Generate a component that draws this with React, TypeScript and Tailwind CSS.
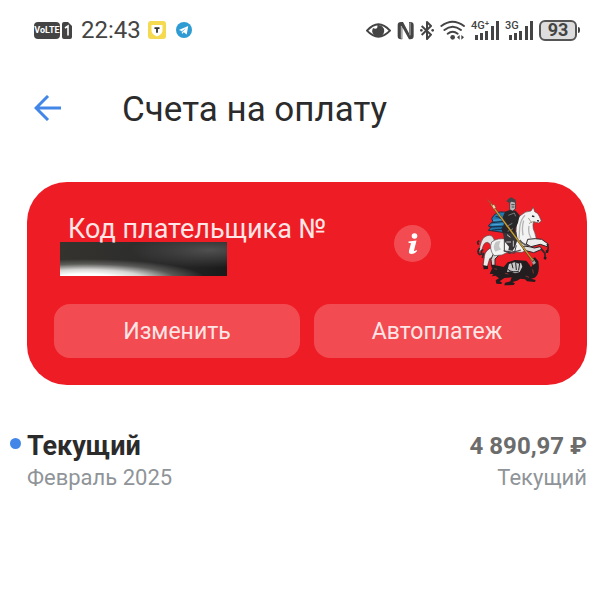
import type { ReactNode } from "react";

type Bill = {
  id: number;
  title: string;
  period: string;
  amount: string;
  status: string;
  isNew: boolean;
};

const bills: Bill[] = [
  {
    id: 1,
    title: "Текущий",
    period: "Февраль 2025",
    amount: "4 890,97 ₽",
    status: "Текущий",
    isNew: true,
  },
];

function EyeIcon() {
  return (
    <svg viewBox="30 30 75 60" className="h-5 w-[25px]" aria-hidden="true">
      <path d="M33 62Q67 24 102 62Q67 98 33 62Z" fill="none" stroke="#444" strokeWidth="6" />
      <path d="M64 45q2 11-6 11-4 0-7-2a18 18 0 1 0 13-9Z" fill="#444" />
    </svg>
  );
}

function NfcIcon() {
  return (
    <svg viewBox="126 30 51 60" className="h-5 w-[17px]" fill="none" aria-hidden="true">
      <path d="M144 36h-6q-10 0-10 10v32q0 10 10 10h4V52l20 36h4q10 0 10-10V46q0-10-10-10h-4v34Z" fill="#444" />
      <path d="M139 48v38M165 38v38" stroke="#fff" strokeWidth="2" />
    </svg>
  );
}

function BluetoothIcon() {
  return (
    <svg viewBox="195 30 42 60" className="h-5 w-3.5" fill="none" aria-hidden="true">
      <path
        d="M200 48l28 26-12 13V36l12 12-28 27"
        stroke="#444"
        strokeWidth="6"
        strokeLinejoin="round"
      />
      <circle cx="199" cy="61" r="4" fill="#444" />
      <circle cx="233" cy="61" r="4" fill="#444" />
    </svg>
  );
}

function WifiIcon() {
  return (
    <svg viewBox="252 30 75 60" className="h-5 w-[25px]" fill="none" aria-hidden="true">
      <g stroke="#444" strokeWidth="6" strokeLinecap="round">
        <path d="M256 48q34-26 68 0" />
        <path d="M265 60q25-20 50 0" />
        <path d="M275 71q15-12 30 0" />
      </g>
      <circle cx="290" cy="82" r="7" fill="#444" />
      <path d="M311 75v14l-8-7ZM316 75v14l8-7Z" fill="#444" />
    </svg>
  );
}

function SignalIcon({ label }: { label: string }) {
  return (
    <svg viewBox="0 0 28 20" className="h-5 w-7 overflow-visible" fill="#444" role="img" aria-label={label}>
      <text x="0" y="9" fontSize="11" fontWeight="500">
        {label}
      </text>
      <path d="M4 15h3v5H4ZM9 13h3v7H9ZM14 11h3v9h-3ZM20 6h3v14h-3ZM25 1h3v19h-3Z" />
    </svg>
  );
}

function StatusBar() {
  return (
    <div className="flex h-5 items-center justify-between pr-[34px] pl-[34px] text-[#444]">
      <div className="flex items-center">
        <span className="flex h-[17px] w-[26px] items-center justify-center rounded-sm bg-[#444] text-[9px] leading-none font-bold text-white">
          VoLTE
        </span>
        <svg viewBox="0 0 10 17" className="ml-0.5 h-[17px] w-2.5" aria-hidden="true">
          <path d="M2 0h4l4 4v11a2 2 0 0 1-2 2H2a2 2 0 0 1-2-2V2a2 2 0 0 1 2-2Z" fill="#444" />
          <path d="M3 6l3-2v9.500" fill="none" stroke="#fff" strokeWidth="1.600" />
        </svg>
        <time className="ml-[9px] text-2xl leading-5">22:43</time>
        <svg viewBox="0 0 18 18" className="ml-[7px] size-[18px]" aria-hidden="true">
          <rect width="18" height="18" rx="3" fill="#f5d94f" />
          <path d="M3.500 4h11v5.500c0 3-3 5-5.500 6-2.500-1-5.500-3-5.500-6Z" fill="#fff" />
          <path d="M6.500 6.200h5v1.800h-1.600v3.800H8.100V8H6.500Z" fill="#333" />
        </svg>
        <svg viewBox="0 0 16 16" className="ml-2.5 size-4" aria-hidden="true">
          <circle cx="8" cy="8" r="8" fill="#2f9bd3" />
          <path d="M2.800 8l9.400-3.900-1.500 8.300-3-2.100-1.700 1.600-.3-2.800Z" fill="#fff" />
          <path d="M5.800 9.200l4.200-3-3.500 3.600Z" fill="#2f9bd3" />
        </svg>
      </div>
      <div className="flex items-center gap-1.5">
        <EyeIcon />
        <NfcIcon />
        <BluetoothIcon />
        <WifiIcon />
        <SignalIcon label="4G⁺" />
        <SignalIcon label="3G" />
        <div className="flex items-center gap-px">
          <span className="flex h-[21px] w-[38px] items-center justify-center rounded-md border-2 border-[#555] bg-[#ddd] text-lg leading-none font-bold">
            93
          </span>
          <span className="h-1.5 w-0.5 rounded-r-sm bg-[#444]" />
        </div>
      </div>
    </div>
  );
}

// Saint George on horseback over the dragon
function MoscowEmblem() {
  return (
    <svg viewBox="0 0 285 300" className="h-[100px] w-[95px] shrink-0" role="img" aria-label="Герб Москвы">
      {/* dragon */}
      <path
        d="M82 234q6-10 18-7l16 4 12-14 22-7 34 2 8 10 6 10 6-10-6-14 12-6 10 12q4 24-2 38-6 14-20 14l14 4-2 6-24-2-6-6-14-2-10 6-14 4 8 4-4 5-28 1 2-8 16-4 4-12-22 2-14 10 8 4-4 4-14-1-2-10 10-6-10-8-12 2 6-6-12-2Z"
        fill="#231d1f"
      />
      <path d="M132 222l16-5 14 4 6-3 4 12-8 16-14 4-14-6-10 2Z" fill="#c9c9c9" />
      <path d="M140 219l4 16M152 218l2 22M164 220l-3 20M128 238q16 12 34 5" stroke="#231d1f" strokeWidth="3" fill="none" />
      <path d="M196 208l8-3 9 14-8 5Z" fill="#a8a2a2" />
      <path d="M88 236l8 2M182 258l10 4M120 250l10 2M203 238l2 12" stroke="#8a3335" strokeWidth="3" />

      {/* tail and hind legs */}
      <path d="M88 150q-6-18-22-13-13 4-17 18-4 10-7 30l9-6q4-22 16-22 8 2 12 14Z" fill="#e4e4e4" stroke="#5a4a4c" strokeWidth="2" />
      <path d="M43 152q-9 4-2 12M44 174q-10 12 0 20l6-2q-3-8 4-14M56 188l-4 16" fill="none" stroke="#30272a" strokeWidth="5" />
      <path d="M84 170q-26 12-26 30l-4 28 13 2 7-24 26-16Z" fill="#ededed" stroke="#30272a" strokeWidth="2" />
      <path d="M98 180q-18 14-20 28l2 20 10-1v-20l18-18Z" fill="#cfcfcf" stroke="#30272a" strokeWidth="3" />
      <path d="M54 226l2 12 13-1v-9ZM79 224l1 10 13-2-2-8Z" fill="#231d1f" />

      {/* horse */}
      <path
        d="M80 156q18-14 44-8l28-4 2-36q2-26 16-34 10-10 28-11l7-11 4 13q11 4 14 14l6 14-8 6-15-4-2 8q-1 14 5 24 8 18 2 34l-12 12-28 14-40-2-20 10-24 2q-16-20-7-41Z"
        fill="#f3f3f3"
        stroke="#5a4a4c"
        strokeWidth="2"
      />
      <path d="M180 76q-14 14-16 38l-2 32M176 92q-6 20-2 44M192 108q-4 20 6 36" fill="none" stroke="#b3b3b3" strokeWidth="4" />
      <path d="M93 155q-12 14-2 30l18-7q-12-10-2-26Z" fill="#c4c4c4" />
      <path d="M116 182q26 8 52-2M164 150q12 16 28 16" fill="none" stroke="#555" strokeWidth="4" />
      <path d="M201 78l7 2M216 92l6 1" stroke="#222" strokeWidth="4" />
      <path d="M192 101q12-10 20-2M190 84l10 14" fill="none" stroke="#7b7558" strokeWidth="2" />

      {/* front legs */}
      <path d="M188 148q24-4 42 0l20 14-4 8-20-7-28 7-14-8Z" fill="#ededed" stroke="#30272a" strokeWidth="3" />
      <path d="M176 168q22 2 32 6l18-4 4 8-24 10-30-8Z" fill="#dedede" stroke="#30272a" strokeWidth="3" />
      <path d="M246 162q6 8 2 20M228 176l12 14v12" fill="none" stroke="#30272a" strokeWidth="5" />
      <path d="M243 180l8 1-2 8-7-1ZM237 200l8 1-2 8-7-2Z" fill="#231d1f" />

      {/* cloak */}
      <path
        d="M116 66q-24-4-36 20l4 9q-9 5-14 13l9 3-9 10 42 6 26-14 10-30-12-16Z"
        fill="#2379ae"
        stroke="#292b3a"
        strokeWidth="3"
      />
      <path d="M80 98l36-4M74 111l42-2M92 80q12-2 26 18M80 121q20-4 38-2" fill="none" stroke="#17344f" strokeWidth="4" />
      <path d="M84 91l30-2M79 105l34-3" fill="none" stroke="#54a6d4" strokeWidth="3" />

      {/* rider */}
      <path d="M120 66l16-7 16 3 12 14-5 22-7 16v14l-16 8-22-4-5-16 10-16-6-18Z" fill="#292629" />
      <path d="M130 76l18-7 4 10M124 110l18-10M128 124l16-8" fill="none" stroke="#77777c" strokeWidth="3" />
      <path d="M114 128l22 2 18-4 4 22-8 24-14 20-8-2 4-20-14-16Z" fill="#383438" />
      <path d="M118 150v34l30 6 6-24" fill="none" stroke="#454045" strokeWidth="3" />
      <path d="M124 156h14M122 180l20 4M145 152v18M126 134l10 8" stroke="#c7c7c7" strokeWidth="3" />
      <path d="M134 42l3-10h12l3 10-1 15-8 6-9-4Z" fill="#b4b6ba" stroke="#292629" strokeWidth="2" />
      <path d="M124 33l8-8 8-3 6 4 6 3v9l-12-3-10 3Z" fill="#474449" />
      <path d="M139 44h10M140 51h8" stroke="#4b4240" strokeWidth="3" />

      {/* spear */}
      <path d="M78 42L205 214" stroke="#4a3524" strokeWidth="6" />
      <path d="M78 42L204 212" stroke="#c49f36" strokeWidth="4" />
      <path d="M65 28l11 6 6 10-8-5ZM80 46l9-4 5 12-7 5Z" fill="#a35338" />
      <path d="M84 46l5 9" stroke="#f4d4b5" strokeWidth="6" />
    </svg>
  );
}

function CardButton({ children }: { children: ReactNode }) {
  return (
    <button type="button" className="h-[54px] flex-1 rounded-2xl bg-[#f24c52] pt-0.5 text-[23px] text-[#ffe5e5]">
      {children}
    </button>
  );
}

function PayerCard() {
  return (
    <section className="mx-[27px] rounded-[40px] bg-[#ee1c25] px-[27px] pt-2 pb-[27px]">
      <div className="flex h-[114px] items-start">
        <div className="pt-[25px] pl-1.5">
          <h2 className="h-[27px] pl-2 text-[27px] leading-7 whitespace-nowrap text-[#ffe5e5]">Код плательщика №</h2>
          {/* hidden payer code */}
          <div className="h-[34px] w-[167px] bg-[#2c2c2a] bg-[radial-gradient(ellipse_120px_20px_at_26px_37px,#fff_25%,#d5d5d3_48%,#77777599_75%,transparent),radial-gradient(ellipse_80px_18px_at_150px_8px,#505050,transparent),linear-gradient(100deg,#34332e,#2c2c2c_55%,#1a1a1a)]" />
        </div>
        <button
          type="button"
          aria-label="Информация"
          className="mt-[35px] mr-[34px] ml-auto flex size-[37px] shrink-0 items-center justify-center rounded-full bg-[#f24c52]"
        >
          <svg viewBox="0 0 12 22" className="h-[22px] w-3" fill="#fff" aria-hidden="true">
            <circle cx="7.500" cy="3" r="2.800" />
            <path d="M1.500 8.500L9.500 7.500 7 17.500c-.2.900.8.700 2.500-.6l.7.900C8.500 20 6.500 21 4.500 21c-2 0-3-1.100-2.500-3.200L4 10.300l-2.600-.5Z" />
          </svg>
        </button>
        <MoscowEmblem />
      </div>
      <div className="flex gap-3.5">
        <CardButton>Изменить</CardButton>
        <CardButton>Автоплатеж</CardButton>
      </div>
    </section>
  );
}

function BillRow({ bill }: { bill: Bill }) {
  return (
    <li className="flex justify-between pr-[27px] pl-2.5">
      <div className="flex">
        <span className={`mt-2 mr-1.5 size-[11px] rounded-full ${bill.isNew ? "bg-[#4287e8]" : ""}`} />
        <div>
          <p className="text-[27px] leading-8 font-bold text-[#2b2b2b]">{bill.title}</p>
          <p className="text-[22px] leading-8 text-[#8f9498]">{bill.period}</p>
        </div>
      </div>
      <div className="text-right">
        <p className="text-2xl leading-8 font-bold text-[#6c6c6c]">{bill.amount}</p>
        <p className="text-[22px] leading-8 text-[#8f9498]">{bill.status}</p>
      </div>
    </li>
  );
}

export default function App() {
  return (
    <div className="min-h-screen bg-white pt-5 font-['Roboto','Noto_Sans',sans-serif]">
      <StatusBar />
      <header className="mt-12 mb-[54px] flex h-10 items-center pl-[34px]">
        <button type="button" aria-label="Назад" className="mr-[60px]">
          <svg viewBox="0 0 28 26" className="block h-[26px] w-7" fill="none" stroke="#4287e8" strokeWidth="3" aria-hidden="true">
            <path d="M14 1L2 13l12 12M2 13h25" />
          </svg>
        </button>
        <h1 className="pt-1 text-[35px] leading-10 text-[#2b2b2b]">Счета на оплату</h1>
      </header>
      <main>
        <PayerCard />
        <ul className="mt-[45px]">
          {bills.map((bill) => (
            <BillRow key={bill.id} bill={bill} />
          ))}
        </ul>
      </main>
    </div>
  );
}
